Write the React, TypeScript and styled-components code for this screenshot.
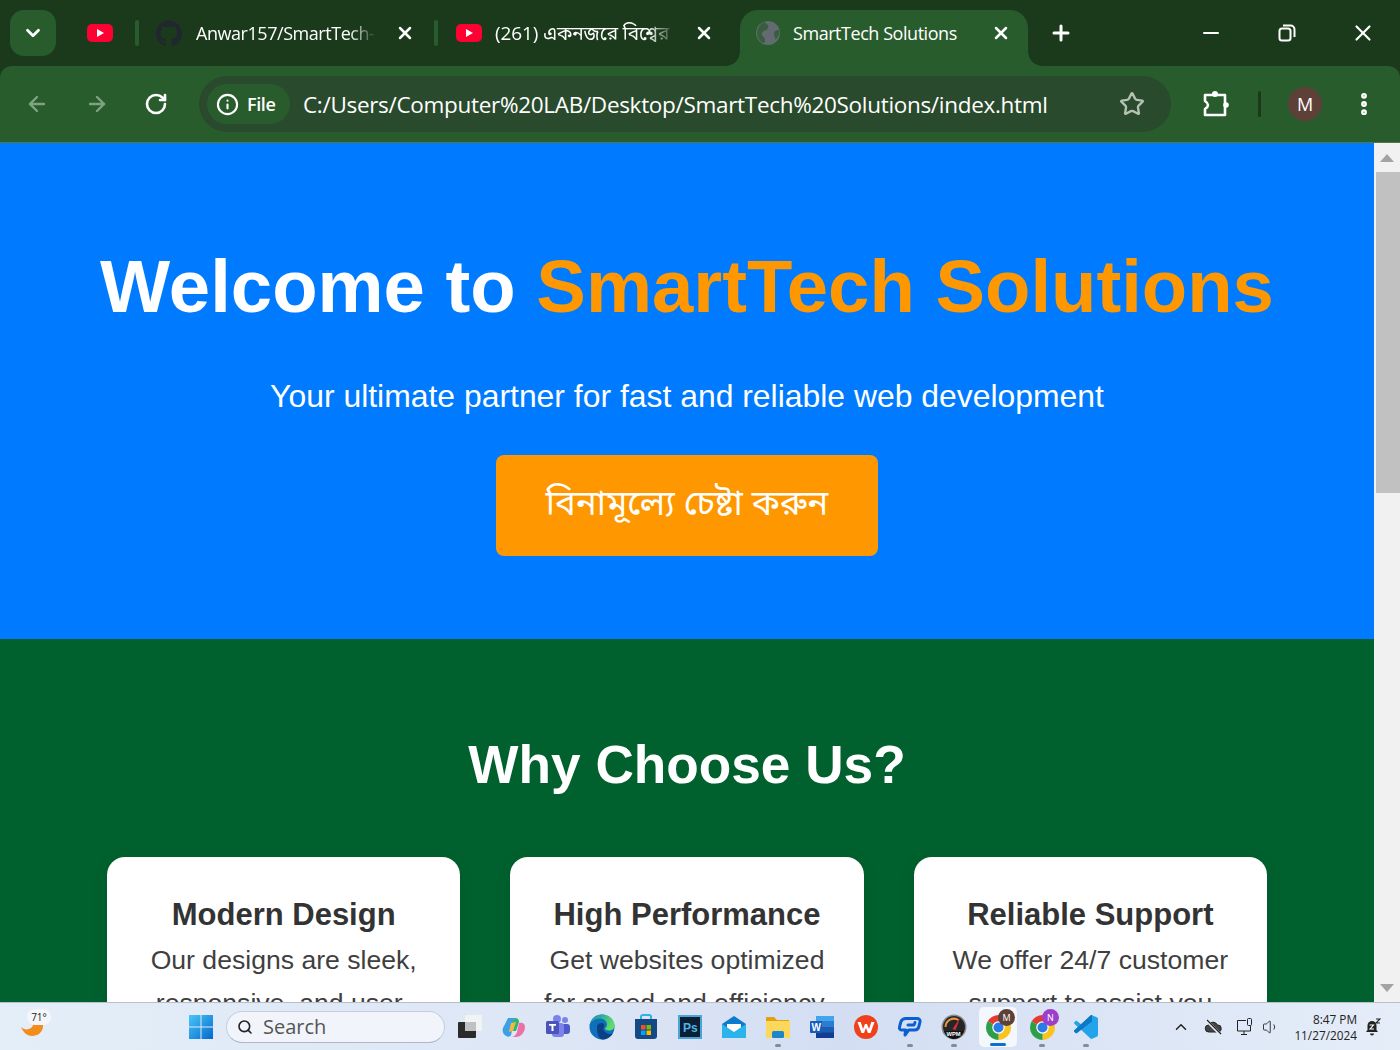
import React from "react";
import styled, { createGlobalStyle } from "styled-components";
import { ArrowLeft, ArrowRight, RotateCw, Star, Info, X, Plus, Minus, ChevronDown, ChevronUp, Search as SearchIcon, EllipsisVertical, Volume1 } from "lucide-react";

const UI = `"Open Sans", "Noto Sans", "Noto Sans Bengali", "Lohit Bengali", "DejaVu Sans", sans-serif`;

const Global = createGlobalStyle`
  html, body { margin: 0; padding: 0; height: 100%; overflow: hidden; }
  * { box-sizing: border-box; }
  #root { height: 100%; }
`;

const Screen = styled.div`
  width: 1400px; height: 1050px; display: flex; flex-direction: column; overflow: hidden; background: #1a3a1b;
  font-family: "Liberation Sans", Arial, sans-serif;
`;

/* ---------- tab strip ---------- */
const TabStrip = styled.header`
  height: 66px; flex: none; background: #1a3a1b; display: flex; align-items: flex-start; padding: 10px 0 0 10px; color: #fff; font-family: ${UI};
`;
const TabSearch = styled.button`
  width: 46px; height: 46px; border: 0; border-radius: 14px; background: #295c2c; color: #fff; display: flex; align-items: center; justify-content: center; padding: 0; flex: none;
`;
const PinnedTab = styled.div`
  width: 79px; height: 46px; display: flex; align-items: center; padding-left: 30px; flex: none;
`;
const TabSep = styled.i`
  width: 4px; height: 26px; border-radius: 2px; background: #295c2c; flex: none; margin-top: 10px;
`;
const Tab = styled.div<{ $w: number; $active?: boolean }>`
  width: ${p => p.$w}px; height: ${p => (p.$active ? 56 : 46)}px; flex: none; display: flex; align-items: center; position: relative;
  padding: ${p => (p.$active ? "0 0 10px 15px" : "0 0 0 17px")};
  background: ${p => (p.$active ? "#295c2c" : "transparent")};
  border-radius: ${p => (p.$active ? "18px 18px 0 0" : "0")};
  ${p => p.$active ? `
    &::before, &::after { content: ""; position: absolute; bottom: 0; width: 14px; height: 14px; }
    &::before { left: -14px; background: radial-gradient(circle at 0 0, transparent 13.500px, #295c2c 14px); }
    &::after { right: -14px; background: radial-gradient(circle at 100% 0, transparent 13.500px, #295c2c 14px); }
  ` : ""}
`;
const TabTitle = styled.span<{ $w: number; $fade?: boolean; $ml: number }>`
  width: ${p => p.$w}px; margin-left: ${p => p.$ml}px; font-size: 18px; line-height: 24px; white-space: nowrap; overflow: hidden; flex: none; letter-spacing: -0.45px;
  ${p => p.$fade ? "-webkit-mask-image: linear-gradient(90deg, #000 85%, transparent 100%); mask-image: linear-gradient(90deg, #000 85%, transparent 100%);" : ""}
`;
const BengaliTitle = styled.span`
  font-size: 19px; letter-spacing: -0.1px;
`;
const TabClose = styled.span<{ $ml: number }>`
  margin-left: ${p => p.$ml}px; display: flex; flex: none;
`;
const NewTab = styled.span`
  margin-left: 21px; height: 46px; display: flex; align-items: center; flex: none;
`;
const WindowControls = styled.div`
  margin-left: auto; height: 46px; display: flex; align-items: center; flex: none; padding-right: 24px; gap: 54.500px;
`;

/* ---------- toolbar ---------- */
const Toolbar = styled.div`
  height: 77px; flex: none; background: #295c2c; display: flex; align-items: center; color: #fff; font-family: ${UI}; padding: 0 0 0 25px;
  border-radius: 12px 12px 0 0; border-bottom: 1px solid #4d7a45;
`;
const NavGroup = styled.div`
  display: flex; gap: 35.500px; align-items: center; flex: none; width: 174px;
`;
const Omnibox = styled.div`
  width: 972px; height: 56px; flex: none; background: #294a2c; border-radius: 28px; display: flex; align-items: center; padding-left: 8px;
`;
const FilePill = styled.div`
  width: 83px; height: 40px; background: #295c2c; border-radius: 20px; display: flex; align-items: center; padding-left: 9px; gap: 8px; font-size: 18px; font-weight: 600; letter-spacing: -0.4px; flex: none;
`;
const Url = styled.span`
  margin-left: 13px; font-size: 22.500px; letter-spacing: -0.31px; white-space: nowrap; color: #fff; flex: none; width: 816px;
`;
const ToolIcons = styled.div`
  display: flex; align-items: center; flex: none; margin-left: 31px;
`;
const ToolSep = styled.i`
  width: 3px; height: 26px; background: #1a3a1b; border-radius: 2px; margin-left: 28px; flex: none;
`;
const Avatar = styled.span`
  width: 34px; height: 34px; border-radius: 50%; background: #5d4037; display: flex; align-items: center; justify-content: center; font-size: 18px; margin-left: 27px; flex: none;
`;
const MenuSlot = styled.span`
  margin-left: 28px; display: flex; flex: none;
`;

/* ---------- page ---------- */
const Viewport = styled.div`
  flex: 1; min-height: 0; display: flex; overflow: hidden;
`;
const Page = styled.main`
  width: 1374px; flex: none; overflow: hidden; text-align: center;
`;
const Hero = styled.section`
  height: 496px; background: #007bff; color: #fff; padding-top: 96px;
`;
const HeroTitle = styled.h1`
  margin: 0; font-size: 74.300px; line-height: 96px; font-weight: 700;
`;
const Accent = styled.span`
  color: #ff9800;
`;
const HeroSub = styled.p`
  margin: 39px 0 0; font-size: 31.900px; line-height: 44px; font-weight: 400;
`;
const Cta = styled.button`
  display: block; margin: 37px auto 0; width: 382px; height: 101px; border: 0; border-radius: 8px; background: #ff9800; color: #fff;
  font-family: "Noto Sans Bengali", "Noto Serif Bengali", "Lohit Bengali", "FreeSerif", "DejaVu Sans", sans-serif; font-size: 34.800px; padding: 0;
`;
const Features = styled.section`
  background: #00612e; padding: 90px 107px 60px; color: #fff; height: 700px;
`;
const FeaturesTitle = styled.h2`
  margin: 0; font-size: 53.200px; line-height: 72px; font-weight: 700;
`;
const Cards = styled.div`
  display: grid; grid-template-columns: repeat(3, 1fr); gap: 50px; margin-top: 56px;
`;
const Card = styled.article`
  background: #fff; border-radius: 18px; padding: 38px 30px 40px; color: #333; box-shadow: 0 4px 15px rgba(0, 0, 0, 0.1);
`;
const CardTitle = styled.h3`
  margin: 0; font-size: 31px; line-height: 40px; font-weight: 700;
`;
const CardText = styled.p`
  margin: 4px 0 0; font-size: 26.600px; line-height: 43px; color: #3f3f3f;
`;

/* scrollbar */
const Scrollbar = styled.div`
  width: 26px; flex: none; background: #f1f1f1; display: flex; flex-direction: column; align-items: center;
`;
const ScrollBtn = styled.div`
  height: 29px; flex: none; width: 100%; display: flex; align-items: center; justify-content: center;
`;
const Thumb = styled.div`
  width: 24px; margin-left: 2px; height: 321px; background: #c1c1c1; flex: none;
`;
const Spacer = styled.div`
  flex: 1;
`;

/* ---------- taskbar ---------- */
const Taskbar = styled.footer`
  height: 48px; flex: none; border-top: 1px solid #b9bfca; background: linear-gradient(90deg, #e4eef8 0%, #dde6f5 40%, #d4def3 60%, #e4edf8 100%);
  display: flex; align-items: center; position: relative; color: #222; font-family: ${UI};
`;
const Weather = styled.div`
  width: 189px; flex: none; height: 100%; position: relative; padding: 10px 0 0 20px;
`;
const TempBadge = styled.span`
  position: absolute; left: 27px; top: 6px; width: 24px; height: 16px; border-radius: 8px; background: #f4f6fb; font-size: 10px; line-height: 16px; text-align: center; color: #222;
`;
const SearchBox = styled.div`
  width: 219px; height: 32px; margin-left: 13px; border-radius: 16px; background: #f1f4fb; border: 1px solid #c6cedd; border-bottom-color: #aeb7c8; display: flex; align-items: center; padding-left: 10px; gap: 10px; color: #555; font-size: 20px; flex: none;
`;
const IconRow = styled.div`
  display: flex; margin-left: 3px; flex: none; align-items: center;
`;
const TaskItem = styled.div<{ $active?: boolean }>`
  width: 44px; height: 40px; flex: none; position: relative; display: flex; align-items: center; justify-content: center; margin-top: 1px;
  &::before { content: ""; position: absolute; inset: 0 3px; border-radius: 5px; background: ${p => (p.$active ? "#f4f7fc" : "transparent")}; }
  & > svg { position: relative; }
`;
const RunDot = styled.i<{ $active?: boolean }>`
  position: absolute; bottom: ${p => (p.$active ? 1 : 0)}px; left: 50%; transform: translateX(-50%); height: 3px; border-radius: 2px;
  width: ${p => (p.$active ? 16 : 6)}px; background: ${p => (p.$active ? "#0a6fd0" : "#858b96")};
`;
const ProfileBadge = styled.span<{ $bg: string }>`
  position: absolute; right: 5px; top: 2px; width: 17px; height: 17px; border-radius: 50%; background: ${p => p.$bg}; color: #fff; font-size: 9px; line-height: 17px; text-align: center;
`;
const Tray = styled.div`
  margin-left: auto; display: flex; align-items: center; flex: none; padding-right: 19px; color: #222;
`;
const TrayIcon = styled.span<{ $ml: number }>`
  margin-left: ${p => p.$ml}px; display: flex; flex: none;
`;
const Clock = styled.div`
  margin-left: 14px; font-size: 11.800px; line-height: 16px; text-align: right; color: #222; flex: none;
`;

/* ---------- drawn icons ---------- */
const YouTube = () => (
  <svg width="28" height="20" viewBox="0 0 28 20"><rect x="1" y="1" width="26" height="18" rx="5" fill="#ff0033" /><path d="M11 6l7 4-7 4z" fill="#fff" /></svg>
);
const GitHubDark = () => (
  <svg width="26" height="26" viewBox="0 0 24 24"><path fill="#22262e" d="M12 .5a12 12 0 0 0-3.800 23.400c.6.100.8-.3.8-.6v-2c-3.300.7-4-1.600-4-1.600-.6-1.400-1.400-1.800-1.400-1.800-1-.7.100-.7.100-.7 1.200.1 1.800 1.200 1.800 1.200 1.100 1.800 2.800 1.300 3.500 1 .1-.8.400-1.300.8-1.600-2.700-.3-5.500-1.300-5.500-5.900 0-1.300.5-2.400 1.200-3.200-.1-.3-.5-1.500.1-3.200 0 0 1-.3 3.300 1.200a11.500 11.500 0 0 1 6 0c2.300-1.500 3.300-1.200 3.300-1.200.6 1.700.2 2.900.1 3.200.8.800 1.200 1.900 1.200 3.200 0 4.600-2.800 5.600-5.500 5.900.4.400.8 1.100.8 2.200v3.300c0 .3.200.7.800.6A12 12 0 0 0 12 .5z" /></svg>
);
const Globe = () => (
  <svg width="26" height="26" viewBox="0 0 26 26"><circle cx="13" cy="13" r="12" fill="#636a70" /><path d="M9 2c3 2 5 3 4 6s-5 2-6 5 3 4 3 7-1 3-2 3c-4-2-6-6-6-10s3-9 7-11zM24 10c-3 0-5 1-5 4s2 3 1 6c3-2 5-6 4-10z" fill="#295c2c" opacity=".75" /></svg>
);
const RestoreIcon = () => (
  <svg width="18" height="18" viewBox="0 0 18 18" fill="none" stroke="#fff" strokeWidth="2"><rect x="1.500" y="4.500" width="11" height="12" rx="2.500" /><path d="M5 1.500h7.500a4 4 0 0 1 4 4V13" /></svg>
);
const PuzzleIcon = () => (
  <svg width="28" height="32" viewBox="0 0 28 32" fill="none" stroke="#fff" strokeWidth="2.600" strokeLinejoin="round"><path d="M3 7H23V27H3V21Q9 17 3 13z" /><circle cx="13" cy="6" r="3" fill="#fff" stroke="none" /><circle cx="24" cy="17" r="2.800" fill="#fff" stroke="none" /></svg>
);
const Flame = () => (
  <svg width="24" height="24" viewBox="0 0 24 24"><path d="M1 14c3 3 7 3 10 1s3-8 2-13c5 1 10 5 10 11 0 6-5 10-11 10C7 23 3 19 1 14z" fill="#f28c1c" /></svg>
);
const WinLogo = () => (
  <svg width="24" height="24" viewBox="0 0 24 24"><defs><linearGradient id="wl" x1="0" y1="0" x2="1" y2="1"><stop offset="0" stopColor="#47c6fb" /><stop offset="1" stopColor="#0669c9" /></linearGradient></defs><path fill="url(#wl)" d="M0 0h11.500v11.500H0zM12.500 0H24v11.500H12.500zM0 12.500h11.500V24H0zM12.500 12.500H24V24H12.500z" /></svg>
);
const TaskView = () => (
  <svg width="24" height="24" viewBox="0 0 24 24"><rect x="0" y="7" width="18" height="16" rx="1" fill="#2b2b2b" /><rect x="7" y="0" width="17" height="16" rx="1" fill="#f2f3f5" /><rect x="7" y="7" width="11" height="9" fill="#bfc1c5" /></svg>
);
const Copilot = () => (
  <svg width="24" height="24" viewBox="0 0 24 24"><path d="M6 3h7l-4 17c-1 2-3 2-5 1-3-2-4-5-3-8z" fill="#3aa0e8" /><path d="M13 3c3 0 4 2 4 4l-3 9H8l3-10z" fill="#2bb673" /><path d="M17 8c4-1 6 1 6 4 0 5-4 10-9 10H9c3 0 5-2 6-5z" fill="#ef6fa9" /><path d="M9 8l5-1-3 9-4 1z" fill="#f6b73c" /></svg>
);
const Teams = () => (
  <svg width="26" height="26" viewBox="0 0 26 26"><circle cx="20" cy="6" r="3" fill="#7b83eb" /><circle cx="12" cy="5" r="4" fill="#7b83eb" /><rect x="16" y="10" width="9" height="10" rx="3" fill="#5059c9" /><rect x="7" y="9" width="12" height="14" rx="3" fill="#7b83eb" /><rect x="1" y="7" width="13" height="13" rx="1.500" fill="#4b53bc" /><path d="M4 10h7v1.800H8.500V17h-2v-5.200H4z" fill="#fff" /></svg>
);
const Edge = () => (
  <svg width="26" height="26" viewBox="0 0 26 26"><defs><linearGradient id="eg" x1="0" y1="0" x2="1" y2=".4"><stop offset="0" stopColor="#0f86c8" /><stop offset="1" stopColor="#5fdc6c" /></linearGradient></defs><circle cx="13" cy="13" r="12.500" fill="#0c71b8" /><path d="M1 11C2 4 7 .5 13 .5c7 0 12.500 5 12.500 11 0 3-2 5-5.500 5-3 0-4-1-4-2 0-1 2-1 2-4 0-3-3-6-7-6-5 0-9 3-10.500 6.500z" fill="url(#eg)" /><path d="M8 13c0-3 3-4 5-4s3 2 2 4c-1 1-1 3 1 5s6 3 8 1c-2 4-6 6.500-10 6.500-4 0-6-5-6-12.500z" fill="#0d3f86" /></svg>
);
const Store = () => (
  <svg width="24" height="26" viewBox="0 0 24 26"><path d="M7 6V3a2 2 0 0 1 2-2h6a2 2 0 0 1 2 2v3" fill="none" stroke="#2fb0e8" strokeWidth="2" /><path d="M1 5h22v17a3 3 0 0 1-3 3H4a3 3 0 0 1-3-3z" fill="#134a85" /><path d="M7 11h4.500v4.500H7z" fill="#f25022" /><path d="M12.500 11H17v4.500h-4.500z" fill="#7fba00" /><path d="M7 16.500h4.500V21H7z" fill="#00a4ef" /><path d="M12.500 16.500H17V21h-4.500z" fill="#ffb900" /></svg>
);
const Photoshop = () => (
  <svg width="24" height="24" viewBox="0 0 24 24"><rect x="1" y="1" width="22" height="22" fill="#0b2033" stroke="#4ba3d8" strokeWidth="2" /><text x="5" y="17" fontSize="12" fontWeight="700" fill="#4fb4ec" fontFamily="Liberation Sans, sans-serif">Ps</text></svg>
);
const Mail = () => (
  <svg width="24" height="24" viewBox="0 0 24 24"><path d="M0 9L12 1l12 8v14H0z" fill="#0b7ccd" /><path d="M5 9h14v6l-7 3-7-3z" fill="#fff" /><path d="M0 9l12 8 12-8v14H0z" fill="#2bb3ec" /></svg>
);
const Explorer = () => (
  <svg width="24" height="24" viewBox="0 0 24 24"><path d="M0 3a1 1 0 0 1 1-1h7l3 3h12v3H0z" fill="#e0a012" /><path d="M0 6h24v17H0z" fill="#fbd75c" /><rect x="6" y="16" width="12" height="7" rx="1.500" fill="#1b86cc" /></svg>
);
const Word = () => (
  <svg width="24" height="24" viewBox="0 0 24 24"><rect x="6" y="1" width="18" height="22" rx="1" fill="#1e5cb0" /><path d="M6 1h18v5.500H6z" fill="#41a5ee" /><path d="M6 6.500h18V12H6z" fill="#2b7cd3" /><path d="M6 17.500h18V23H6z" fill="#103f91" /><rect x="0" y="6" width="12" height="12" rx="1" fill="#185abd" /><text x="1.500" y="15.500" fontSize="10" fontWeight="700" fill="#fff" fontFamily="Liberation Sans, sans-serif">W</text></svg>
);
const Wps = () => (
  <svg width="24" height="24" viewBox="0 0 24 24"><circle cx="12" cy="12" r="12" fill="#f0401c" /><path d="M3.500 7h3.200l2.300 7 2-5h2l2 5 2.300-7h3.200l-4 11h-2.600L12 13l-2 5H7.500z" fill="#fff" /></svg>
);
const CloudChat = () => (
  <svg width="24" height="22" viewBox="0 0 24 22" fill="none" stroke="#0b5fd1" strokeWidth="3" strokeLinejoin="round" strokeLinecap="round"><path d="M8 2.500h11c2 0 3.500 1.500 3 3.500l-1.300 5c-.5 2-2 3-4 3h-6l-3.700 5 .7-5H4c-2 0-3-1.500-2.500-3l1.300-5C3.500 4 5.500 2.500 8 2.500z" /><path d="M10 9h6l1-2.500" /></svg>
);
const Gauge = () => (
  <svg width="26" height="26" viewBox="0 0 26 26"><circle cx="13" cy="13" r="12.500" fill="#8a8a8a" /><circle cx="13" cy="13" r="11" fill="#26262a" /><path d="M4.500 13a8.500 8.500 0 0 1 13-7" fill="none" stroke="#e8983a" strokeWidth="2" /><path d="M11.500 15L19 4l-4.500 12z" fill="#e02d2d" /><path d="M3 17h20c-2 6-6 8-10 8s-8-2-10-8z" fill="#141416" /><text x="5.500" y="22" fontSize="5.800" fontWeight="700" fill="#fff" fontFamily="Liberation Sans, sans-serif">WPM</text></svg>
);
const Chrome = () => (
  <svg width="25" height="25" viewBox="4 4 40 40"><path d="M24 24L6.700 14A20 20 0 0 1 41.300 14z" fill="#e23c30" /><path d="M24 24L41.300 14A20 20 0 0 1 24 44z" fill="#f9c41d" /><path d="M24 24L24 44A20 20 0 0 1 6.700 14z" fill="#2f9e48" /><circle cx="24" cy="24" r="10" fill="#fff" /><circle cx="24" cy="24" r="8" fill="#2a7de9" /></svg>
);
const VSCode = () => (
  <svg width="24" height="24" viewBox="0 0 100 100"><path fill="#23a3ea" d="M70.900 99.300c1.600.6 3.400.6 5-.2l20.600-9.900c2.200-1 3.500-3.200 3.500-5.600V16.400c0-2.400-1.400-4.600-3.500-5.600L75.900.9c-2.100-1-4.500-.8-6.300.6-.3.2-.5.4-.8.7L29.400 38.100 12.200 25.100c-1.600-1.200-3.800-1.100-5.300.2L1.400 30.400c-1.800 1.600-1.800 4.500 0 6.100L16.300 50 1.400 63.600c-1.800 1.600-1.800 4.500 0 6.100l5.500 5c1.500 1.300 3.700 1.400 5.300.2l17.200-13 39.400 35.800c.6.600 1.300 1.100 2.100 1.400zM75 27.300L45.100 50 75 72.700z" /><path fill="#0f78c4" d="M68.800 2.200 1.400 63.600c-1.800 1.600-1.800 4.500 0 6.100l5.500 5c1.500 1.300 3.700 1.400 5.300.2L75 27.300V.5c-2.300-.4-4.500.2-6.200 1.700z" /></svg>
);
const CloudOff = () => (
  <svg width="18" height="16" viewBox="0 0 18 16"><path d="M5 13a3.500 3.500 0 0 1-.5-7A5 5 0 0 1 13.500 6 3.500 3.500 0 0 1 14 13z" fill="#444" stroke="#222" /><path d="M2 1l14 14" stroke="#e8edf6" strokeWidth="3" /><path d="M3 1l14 14" stroke="#222" strokeWidth="1.200" /></svg>
);
const PcIcon = () => (
  <svg width="18" height="18" viewBox="0 0 18 18" fill="none" stroke="#222" strokeWidth="1"><path d="M10 2.500H1.500V13h13V8" /><path d="M5 16.500h6M8 13v3.500" /><rect x="11.500" y="0.500" width="4" height="7" rx="1" /></svg>
);
const Bell = () => (
  <svg width="16" height="18" viewBox="0 0 16 18"><path d="M7 3a4.500 4.500 0 0 0-4.500 4.500V12L1 14h12l-1.500-2V7.500A4.500 4.500 0 0 0 7 3z" fill="#222" /><path d="M5 15.500h4a2 2 0 0 1-4 0z" fill="#222" /><path d="M4.500 7h4L5 11h4" fill="none" stroke="#fff" strokeWidth="1.100" /><path d="M11 1h4l-4 4h4" fill="none" stroke="#222" strokeWidth="1.100" /></svg>
);
const ArrowTri = ({ down }: { down?: boolean }) => (
  <svg width="14" height="8" viewBox="0 0 14 8"><path d={down ? "M0 0h14L7 8z" : "M7 0l7 8H0z"} fill="#a3a3a3" /></svg>
);

const taskIcons: { key: string; node: React.ReactNode; dot?: boolean; active?: boolean; badge?: [string, string] }[] = [
  { key: "taskview", node: <TaskView /> },
  { key: "copilot", node: <Copilot /> },
  { key: "teams", node: <Teams /> },
  { key: "edge", node: <Edge /> },
  { key: "store", node: <Store /> },
  { key: "ps", node: <Photoshop /> },
  { key: "mail", node: <Mail /> },
  { key: "explorer", node: <Explorer />, dot: true },
  { key: "word", node: <Word /> },
  { key: "wps", node: <Wps /> },
  { key: "cloud", node: <CloudChat />, dot: true },
  { key: "gauge", node: <Gauge />, dot: true },
  { key: "chrome1", node: <Chrome />, dot: true, active: true, badge: ["M", "#5d4037"] },
  { key: "chrome2", node: <Chrome />, dot: true, badge: ["N", "#9c3fc9"] },
  { key: "vscode", node: <VSCode />, dot: true },
];

const features = [
  { title: "Modern Design", text: "Our designs are sleek, responsive, and user-friendly." },
  { title: "High Performance", text: "Get websites optimized for speed and efficiency." },
  { title: "Reliable Support", text: "We offer 24/7 customer support to assist you anytime." },
];

export default function App() {
  return (
    <Screen>
      <Global />
      <TabStrip>
        <TabSearch><ChevronDown size={22} strokeWidth={3} /></TabSearch>
        <PinnedTab><YouTube /></PinnedTab>
        <TabSep />
        <Tab $w={295}>
          <GitHubDark />
          <TabTitle $w={180} $ml={14} $fade>Anwar157/SmartTech-Solutions</TabTitle>
          <TabClose $ml={19}><X size={20} strokeWidth={3} /></TabClose>
        </Tab>
        <TabSep />
        <Tab $w={302}>
          <YouTube />
          <TabTitle $w={180} $ml={12} $fade><BengaliTitle>(261) একনজরে বিশ্বের সেরা</BengaliTitle></TabTitle>
          <TabClose $ml={19}><X size={20} strokeWidth={3} /></TabClose>
        </Tab>
        <Tab $w={288} $active>
          <Globe />
          <TabTitle $w={166} $ml={12}>SmartTech Solutions</TabTitle>
          <TabClose $ml={32}><X size={20} strokeWidth={3} /></TabClose>
        </Tab>
        <NewTab><Plus size={24} strokeWidth={3} /></NewTab>
        <WindowControls>
          <Minus size={24} strokeWidth={2} />
          <RestoreIcon />
          <X size={26} strokeWidth={2} />
        </WindowControls>
      </TabStrip>
      <Toolbar>
        <NavGroup>
          <ArrowLeft size={24} color="#7ea383" strokeWidth={2.4} />
          <ArrowRight size={24} color="#7ea383" strokeWidth={2.4} />
          <RotateCw size={24} strokeWidth={2.6} />
        </NavGroup>
        <Omnibox>
          <FilePill><Info size={23} strokeWidth={2.2} />File</FilePill>
          <Url>C:/Users/Computer%20LAB/Desktop/SmartTech%20Solutions/index.html</Url>
          <Star size={26} color="#b4c2b4" strokeWidth={2.2} />
        </Omnibox>
        <ToolIcons>
          <PuzzleIcon />
          <ToolSep />
          <Avatar>M</Avatar>
          <MenuSlot><EllipsisVertical size={28} strokeWidth={3} /></MenuSlot>
        </ToolIcons>
      </Toolbar>
      <Viewport>
        <Page>
          <Hero>
            <HeroTitle>Welcome to <Accent>SmartTech Solutions</Accent></HeroTitle>
            <HeroSub>Your ultimate partner for fast and reliable web development</HeroSub>
            <Cta>বিনামূল্যে চেষ্টা করুন</Cta>
          </Hero>
          <Features>
            <FeaturesTitle>Why Choose Us?</FeaturesTitle>
            <Cards>
              {features.map(f => (
                <Card key={f.title}>
                  <CardTitle>{f.title}</CardTitle>
                  <CardText>{f.text}</CardText>
                </Card>
              ))}
            </Cards>
          </Features>
        </Page>
        <Scrollbar>
          <ScrollBtn><ArrowTri /></ScrollBtn>
          <Thumb />
          <Spacer />
          <ScrollBtn><ArrowTri down /></ScrollBtn>
        </Scrollbar>
      </Viewport>
      <Taskbar>
        <Weather><Flame /><TempBadge>71°</TempBadge></Weather>
        <WinLogo />
        <SearchBox><SearchIcon size={16} strokeWidth={2.4} color="#222" />Search</SearchBox>
        <IconRow>
          {taskIcons.map(t => (
            <TaskItem key={t.key} $active={t.active}>
              {t.node}
              {t.badge && <ProfileBadge $bg={t.badge[1]}>{t.badge[0]}</ProfileBadge>}
              {t.dot && <RunDot $active={t.active} />}
            </TaskItem>
          ))}
        </IconRow>
        <Tray>
          <ChevronUp size={18} strokeWidth={2} />
          <TrayIcon $ml={14}><CloudOff /></TrayIcon>
          <TrayIcon $ml={14}><PcIcon /></TrayIcon>
          <TrayIcon $ml={8}><Volume1 size={18} strokeWidth={1.2} /></TrayIcon>
          <Clock>8:47 PM<br />11/27/2024</Clock>
          <TrayIcon $ml={8}><Bell /></TrayIcon>
        </Tray>
      </Taskbar>
    </Screen>
  );
}
